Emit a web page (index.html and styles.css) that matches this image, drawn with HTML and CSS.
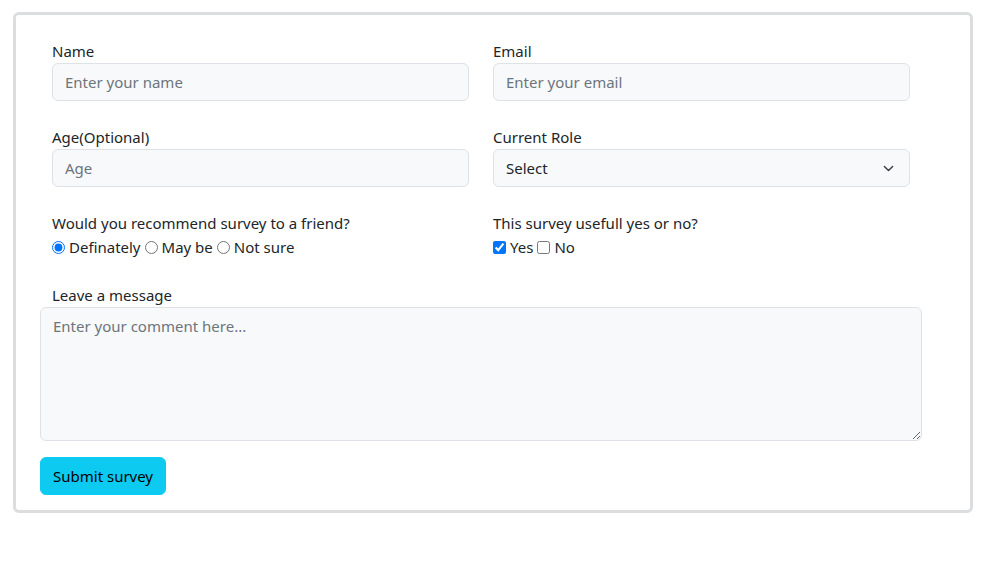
FILE: index.html
```html
<!DOCTYPE html>
<html lang="en">
<head>
<meta charset="utf-8">
<title>Survey</title>
<link rel="stylesheet" href="styles.css">
</head>
<body>
<div class="card">
  <form class="inner">
    <div class="row">
      <div class="col">
        <label class="form-label" for="name">Name</label>
        <input class="form-control" id="name" type="text" placeholder="Enter your name">
      </div>
      <div class="col">
        <label class="form-label" for="email">Email</label>
        <input class="form-control" id="email" type="email" placeholder="Enter your email">
      </div>
    </div>
    <div class="row">
      <div class="col">
        <label class="form-label" for="age">Age(Optional)</label>
        <input class="form-control" id="age" type="text" placeholder="Age">
      </div>
      <div class="col">
        <label class="form-label" for="role">Current Role</label>
        <select class="form-select" id="role">
          <option>Select</option>
        </select>
      </div>
    </div>
    <div class="row">
      <div class="col">
        <div class="form-label">Would you recommend survey to a friend?</div>
        <div class="choices">
          <label class="choice"><input type="radio" name="rec" checked>Definately</label>
          <label class="choice"><input type="radio" name="rec">May be</label>
          <label class="choice"><input type="radio" name="rec">Not sure</label>
        </div>
      </div>
      <div class="col">
        <div class="form-label">This survey usefull yes or no?</div>
        <div class="choices">
          <label class="choice"><input type="checkbox" checked>Yes</label>
          <label class="choice"><input type="checkbox">No</label>
        </div>
      </div>
    </div>
    <div class="message">
      <label class="form-label msg-label" for="msg">Leave a message</label>
      <textarea class="form-control textarea" id="msg" placeholder="Enter your comment here..."></textarea>
    </div>
    <button class="btn" type="button">Submit survey</button>
  </form>
</div>
</body>
</html>
```

FILE: styles.css
```css
* { box-sizing: border-box; }
html, body { margin: 0; background: #fff; }
body {
  padding: 12px 16px 0 13px;
  font-family: "Noto Sans", "Open Sans", sans-serif;
  font-size: 15px;
  line-height: 24px;
  color: #212529;
}
.card {
  width: 960px;
  border: 3px solid #dcdddf;
  border-radius: 6px;
  padding: 24px 24px 15px 24px;
}
.inner {
  width: 882px;
  display: flex;
  flex-direction: column;
}
.row {
  display: grid;
  grid-template-columns: 1fr 1fr;
  margin-bottom: 24px;
}
.col {
  padding: 0 12px;
  display: flex;
  flex-direction: column;
}
.form-label {
  display: block;
  height: 24px;
  line-height: 24px;
}
.form-control, .form-select {
  height: 38px;
  width: 100%;
  border: 1px solid #dee2e6;
  border-radius: 6px;
  background-color: #f8f9fa;
  padding: 6px 12px;
  font: inherit;
  line-height: 24px;
  color: #212529;
}
.form-control::placeholder { color: #6c757d; opacity: 1; }
.form-select {
  appearance: none;
  -webkit-appearance: none;
  background-image: url("data:image/svg+xml,%3csvg xmlns='http://www.w3.org/2000/svg' viewBox='0 0 16 16'%3e%3cpath fill='none' stroke='%23343a40' stroke-linecap='round' stroke-linejoin='round' stroke-width='2' d='m2 5 6 6 6-6'/%3e%3c/svg%3e");
  background-repeat: no-repeat;
  background-position: right 14px center;
  background-size: 13px 11px;
}
.choices {
  display: flex;
  align-items: center;
  height: 24px;
}
.choice {
  display: inline-flex;
  align-items: center;
  margin-right: 4px;
}
.choice input {
  margin: 0 4px 0 0;
  width: 13px;
  height: 13px;
}
.message {
  display: flex;
  flex-direction: column;
}
.msg-label { padding-left: 12px; }
.textarea {
  height: 134px;
  resize: vertical;
}
.btn {
  margin-top: 16px;
  align-self: flex-start;
  height: 38px;
  white-space: nowrap;
  background: #0dcaf0;
  border: 1px solid #0dcaf0;
  border-radius: 6px;
  font: inherit;
  line-height: 24px;
  color: #000;
  padding: 6px 12px;
}
```
